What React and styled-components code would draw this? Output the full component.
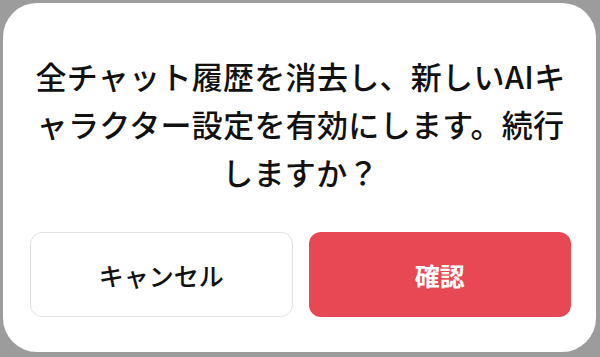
import styled, { createGlobalStyle } from "styled-components";

const GlobalStyle = createGlobalStyle`
  html, body {
    margin: 0;
    padding: 0;
    background: #9c9c9c;
  }
  body {
    font-family: "Noto Sans CJK JP", "Noto Sans", sans-serif;
  }
`;

const Backdrop = styled.div`
  width: 600px;
  height: 357px;
  box-sizing: border-box;
  padding: 3px 4px 5px 3px;
  display: flex;
`;

const Dialog = styled.div`
  flex: 1;
  background: #ffffff;
  border-radius: 34px;
  box-sizing: border-box;
  padding: 49px 25px 35px 27px;
  display: flex;
  flex-direction: column;
`;

const Message = styled.p`
  margin: 0;
  text-align: center;
  font-size: 31px;
  line-height: 48px;
  letter-spacing: 0.3px;
  font-weight: 500;
  color: #111111;
`;

const Actions = styled.div`
  display: grid;
  grid-template-columns: 1fr 1fr;
  gap: 16px;
  margin-top: auto;
`;

const Button = styled.button`
  height: 85px;
  border-radius: 12px;
  font-family: inherit;
  font-size: 25px;
  cursor: pointer;
  border: ${(p) => (p.$primary ? "none" : "1.5px solid #e2e2e2")};
  background: ${(p) => (p.$primary ? "#e84854" : "#ffffff")};
  color: ${(p) => (p.$primary ? "#ffffff" : "#111111")};
  font-weight: ${(p) => (p.$primary ? 700 : 500)};
`;

export default function App() {
  return (
    <>
      <GlobalStyle />
      <Backdrop>
        <Dialog>
          <Message>
            全チャット履歴を消去し、新しいAIキャラクター設定を有効にします。続行しますか？
          </Message>
          <Actions>
            <Button>キャンセル</Button>
            <Button $primary>確認</Button>
          </Actions>
        </Dialog>
      </Backdrop>
    </>
  );
}
